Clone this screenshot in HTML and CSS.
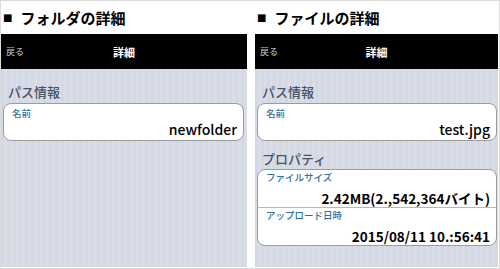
FILE: index.html
```html
<!DOCTYPE html>
<html lang="ja">
<head>
    <meta charset="UTF-8">
    <meta name="viewport" content="width=device-width, initial-scale=1.0">
    <title>詳細</title>
    <link rel="stylesheet" href="styles.css">
</head>
<body>
    <div class="frame">
        <section class="screen">
            <h1 class="caption"><span class="mark">■</span>フォルダの詳細</h1>
            <div class="navbar">
                <span class="back">戻る</span>
                <span class="nav-title">詳細</span>
            </div>
            <div class="content">
                <h2 class="group-title">パス情報</h2>
                <div class="card">
                    <div class="row">
                        <div class="label">名前</div>
                        <div class="value">newfolder</div>
                    </div>
                </div>
            </div>
        </section>
        <section class="screen">
            <h1 class="caption"><span class="mark">■</span>ファイルの詳細</h1>
            <div class="navbar">
                <span class="back">戻る</span>
                <span class="nav-title">詳細</span>
            </div>
            <div class="content">
                <h2 class="group-title">パス情報</h2>
                <div class="card">
                    <div class="row">
                        <div class="label">名前</div>
                        <div class="value">test.jpg</div>
                    </div>
                </div>
                <h2 class="group-title group-title-next">プロパティ</h2>
                <div class="card props">
                    <div class="row">
                        <div class="label">ファイルサイズ</div>
                        <div class="value">2.42MB(2.,542,364バイト)</div>
                    </div>
                    <div class="row">
                        <div class="label">アップロード日時</div>
                        <div class="value">2015/08/11 10.:56:41</div>
                    </div>
                </div>
            </div>
        </section>
    </div>
</body>
</html>
```

FILE: styles.css
```css
body {
    margin: 0;
    font-family: "Noto Sans CJK JP", "Noto Sans", sans-serif;
    background: #fff;
}
.frame {
    width: 500px;
    height: 269px;
    box-sizing: border-box;
    border: 1px solid #dcdcdc;
    padding: 0 1px 1px 0;
    display: flex;
    gap: 8px;
}
.screen {
    display: flex;
    flex-direction: column;
    flex: 1;
}
.screen:first-child {
    flex: 0 0 246px;
}
.caption {
    margin: 0;
    height: 33px;
    line-height: 33px;
    font-size: 15px;
    font-weight: bold;
    color: #000;
    padding-left: 2px;
    display: flex;
    align-items: center;
}
.mark {
    font-family: "DejaVu Sans", sans-serif;
    font-size: 10px;
    margin-right: 8px;
}
.navbar {
    height: 35px;
    background: #000;
    display: grid;
    grid-template-columns: 1fr auto 1fr;
    align-items: center;
}
.back {
    font-size: 9px;
    color: #d0d0d0;
    padding-left: 5px;
}
.nav-title {
    font-size: 11px;
    font-weight: bold;
    color: #fff;
}
.content {
    flex: 1;
    background: repeating-linear-gradient(90deg, #d4d8e2 0 3px, #d9dde7 3px 6px);
    padding: 13px 3px 0 2px;
}
.screen + .screen .content {
    padding-right: 1px;
}
.group-title {
    margin: 0 0 2px 5px;
    font-size: 13px;
    line-height: 19px;
    font-weight: 500;
    color: #4a5264;
}
.group-title-next {
    margin-top: 8px;
    margin-bottom: 1px;
}
.card {
    background: #fff;
    border: 1px solid #9c9c9c;
    border-radius: 8px;
    overflow: hidden;
}
.row {
    padding: 4px 6px 2px 8px;
}
.row + .row {
    border-top: 1px solid #b8b8b8;
}
.label {
    font-size: 9.5px;
    line-height: 10px;
    font-weight: 500;
    color: #2f6e9e;
}
.value {
    margin-top: 2px;
    font-size: 14px;
    line-height: 18px;
    font-weight: 500;
    color: #000;
    text-align: right;
    white-space: nowrap;
}
.props .row {
    padding: 2px 6px 0 8px;
}
.props .value {
    margin-top: 7px;
    font-size: 13.5px;
    font-weight: bold;
}
```
